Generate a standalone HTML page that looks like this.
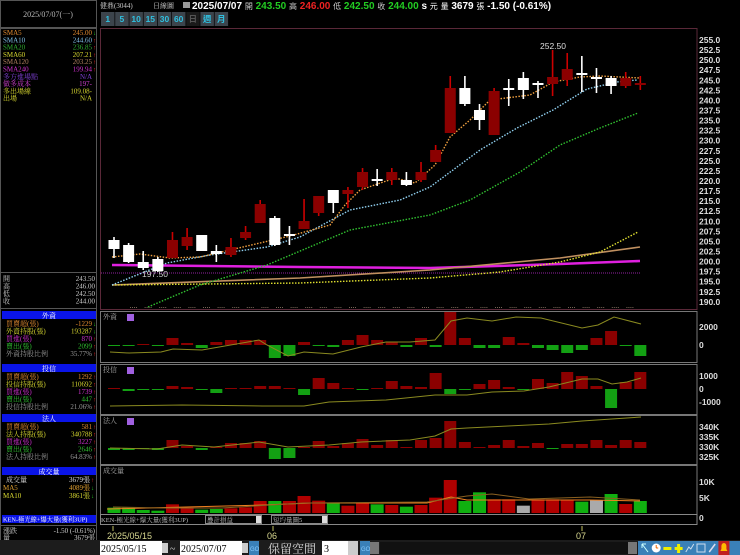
<!DOCTYPE html>
<html><head><meta charset="utf-8">
<style>
html,body{margin:0;padding:0;background:#000;width:740px;height:555px;overflow:hidden}
svg{display:block}
text{font-family:"Liberation Serif","Noto Serif CJK TC",serif;font-size:7px}
.s{font-family:"Liberation Sans","Noto Sans CJK TC",sans-serif}
</style></head><body>
<svg id="g" width="740" height="555" xmlns="http://www.w3.org/2000/svg">
<rect width="740" height="555" fill="#000"/>
</svg>
<script>
const S=document.getElementById('g');let h='';
function R(x,y,w,hh,f,st){h+=`<rect x="${x}" y="${y}" width="${w}" height="${hh}" fill="${f}"${st?` stroke="${st}"`:''}/>`;}
function L(x1,y1,x2,y2,c,w,d){h+=`<line x1="${x1}" y1="${y1}" x2="${x2}" y2="${y2}" stroke="${c}" stroke-width="${w||1}"${d?` stroke-dasharray="${d}"`:''}/>`;}
function T(x,y,t,c,o){o=o||{};h+=`<text x="${x}" y="${y}" fill="${c}"${o.a?` text-anchor="${o.a}"`:''}${o.cl?` class="${o.cl}"`:''}${o.s?` style="${o.s}"`:''}>${t}</text>`;}
function P(pts,c,w,d){h+=`<polyline points="${pts.map(p=>p.join(',')).join(' ')}" fill="none" stroke="${c}" stroke-width="${w||1}"${d?` stroke-dasharray="${d}"`:''}/>`;}
const RED='#8b0000',GRN='#13a013';
// left panel
R(0.5,0.5,96,27,'#000','#555');
T(48,17,'2025/07/07(一)','#bbb',{a:'middle',s:'font-size:8px'});
R(0.5,28.5,96,512,'#000','#555');
const ma=[['SMA5','245.00','#e08a30','↓','#2c2'],['SMA10','244.60','#80c0e8','↑','#e22'],['SMA20','236.85','#30b030','↑','#e22'],['SMA60','207.21','#d8d830','↑','#e22'],['SMA120','203.25','#b08060','↑','#e22'],['SMA240','199.94','#d030d0','↑','#e22'],['多方進場點','N/A','#8040d8','',''],['做多成本','197-','#d040d0','',''],['多出場線','109.08-','#d8d830','',''],['出場','N/A','#d8d830','','']];
ma.forEach((m,i)=>{let y=35+i*7.3;T(3,y,m[0],m[2]);T(92,y,m[1],m[2],{a:'end'});if(m[3])T(93,y,m[3],m[4],{s:'font-size:6px'});});
R(0.5,272.5,96,36,'#000','#555');
[['開','243.50'],['高','246.00'],['低','242.50'],['收','244.00']].forEach((m,i)=>{let y=281+i*7.5;T(3,y,m[0],'#ccc');T(95,y,m[1],'#ccc',{a:'end'});});
function sec(y0,title,rows){R(2,y0,94,8,'#0a14e8');T(49,y0+7,title,'#fff',{a:'middle'});rows.forEach((r,i)=>{let y=y0+15+i*7.5;T(6,y,r[0],r[2]);T(92,y,r[1],r[2],{a:'end'});if(r[3])T(93,y,r[3],r[3]=='↓'?'#2c2':'#e22',{s:'font-size:6px'});});}
sec(311,'外資',[['買賣超(張)','-1229','#e08a30','↓'],['外資持股(張)','193287','#d8d830','↓'],['買進(張)','870','#d030d0','↑'],['賣出(張)','2099','#30c030','↑'],['外資持股比例','35.77%','#999','↑']]);
sec(364,'投信',[['買賣超(張)','1292','#e08a30','↑'],['投信持股(張)','110692','#d8d830','↑'],['買進(張)','1739','#d030d0','↑'],['賣出(張)','447','#30c030','↑'],['投信持股比例','21.06%','#999','↑']]);
sec(414,'法人',[['買賣超(張)','581','#e08a30','↑'],['法人持股(張)','340788','#d8d830','↑'],['買進(張)','3227','#d030d0','↑'],['賣出(張)','2646','#30c030','↑'],['法人持股比例','64.83%','#999','↑']]);
R(2,467,94,8,'#0a14e8');T(49,474,'成交量','#fff',{a:'middle'});
T(6,482,'成交量','#ddd');T(90,482,'3679張','#ddd',{a:'end'});T(91,482,'↑','#e22',{s:'font-size:6px'});
T(3,490,'MA5','#e0a030');T(90,490,'4089張','#e0a030',{a:'end'});T(91,490,'↓','#2c2',{s:'font-size:6px'});
T(3,498,'MA10','#d8d830');T(90,498,'3861張','#d8d830',{a:'end'});T(91,498,'↓','#2c2',{s:'font-size:6px'});
R(2,515,94,8,'#0a14e8');T(3,521.5,'KEN-極光線+爆大量(獲利3UP)','#fff',{s:'font-size:6.3px'});
L(0,525.5,97,525.5,'#555');
T(3,533,'漲跌','#ccc');T(95,533,'-1.50 (-0.61%)','#ccc',{a:'end'});
T(3,540,'量','#ccc');T(95,540,'3679張','#ccc',{a:'end'});
// header
T(100,8,'健鼎(3044)','#ccc');T(153,8,'日線圖','#ccc');R(183,2,7,6,'#999');
h+=`<text x="192" y="9" class="s" style="font-size:10px;font-weight:bold" fill="#fff">2025/07/07 <tspan fill="#ccc" style="font-size:8px;font-weight:normal">開</tspan> <tspan fill="#2c2">243.50</tspan> <tspan fill="#ccc" style="font-size:8px;font-weight:normal">高</tspan> <tspan fill="#e22">246.00</tspan> <tspan fill="#ccc" style="font-size:8px;font-weight:normal">低</tspan> <tspan fill="#2c2">242.50</tspan> <tspan fill="#ccc" style="font-size:8px;font-weight:normal">收</tspan> <tspan fill="#2c2">244.00</tspan> s <tspan style="font-size:8px;font-weight:normal">元</tspan>  <tspan style="font-size:8px;font-weight:normal">量</tspan> 3679 <tspan style="font-size:8px;font-weight:normal">張</tspan>  -1.50 (-0.61%)</text>`;
['1','5','10','15','30','60','日','週','月'].forEach((b,i)=>{let x=101+i*14.2;R(x,12,13.5,14,b=='日'?'#1a1a1a':'#3c444c');T(x+6.7,22,b,b=='日'?'#555':'#30c0e0',{a:'middle',cl:'s',s:'font-size:8.5px;font-weight:bold'});});
// main chart
R(100.5,28.5,596.5,281,'#000','#5a2838');
for(let i=0;i<=26;i++){let p=255-i*2.5,y=40+i*10.07;T(699,y+3,p.toFixed(1),'#ddd',{cl:'s',s:'font-size:8.5px;font-weight:bold'});}
const X=i=>114+14.62*i;
L(101,273,640,273,'#9020a0',1,'1 1');
P([[112,265],[300,267],[430,268],[560,264],[640,261]],'#e020e0',2.5);
P([[112,285],[300,278],[430,270],[560,258],[640,247]],'#c09060',1.6);
P([[112,285],[300,283],[430,278],[500,272],[560,262],[600,252],[638,232]],'#e0e030',1.4,'1.5 1.5');
P([[148,307],[200,285],[267,265],[350,230],[430,215],[470,200],[520,172],[560,145],[600,128],[638,113]],'#30c030',1.4,'1.5 1.5');
P([[112,285],[167,263],[210,255],[267,247],[300,237],[350,210],[400,200],[430,187],[480,150],[517,128],[553,110],[587,89],[617,82],[637,80]],'#90d0f0',1.4,'1.5 1.5');
P([[112,257],[140,254],[170,258],[200,257],[230,250],[260,243],[290,236],[330,225],[345,205],[360,190],[395,178],[415,183],[435,165],[450,137],[470,120],[490,100],[530,95],[553,82],[580,77],[600,76],[640,78]],'#f0a040',1.4,'1.5 1.5');
const C=[[240,249,237,258,'w'],[245,262,243,263,'w'],[262,268,251,270,'w'],[259,271,257,272,'w'],[240,258,232,258,'r'],[237,246,228,250,'r'],[235,251,235,251,'w'],[251,254,245,262,'w'],[247,255,238,257,'r'],[232,238,226,240,'r'],[204,223,200,223,'r'],[218,245,216,246,'w'],[234,236,226,245,'w'],[221,229,199,229,'r'],[196,213,196,216,'r'],[190,203,190,213,'w'],[190,194,187,208,'r'],[172,187,168,190,'r'],[179,181,169,186,'w'],[172,180,168,185,'r'],[180,185,172,186,'w'],[172,180,162,182,'r'],[150,162,145,162,'r'],[88,133,76,133,'r'],[88,104,76,106,'w'],[110,120,104,130,'w'],[91,135,88,135,'r'],[88,90,79,106,'w'],[78,90,72,99,'w'],[83,85,81,98,'w'],[77,84,50,96,'r'],[69,80,53,86,'r'],[73,75,56,92,'w'],[77,79,68,93,'w'],[78,86,76,94,'w'],[78,86,72,88,'r'],[83,85,76,90,'r']];
C.forEach((c,i)=>{let x=X(i),col=c[4]=='r'?RED:'#fff',wc=c[4]=='r'?'#c00':'#fff';L(x,c[2],x,c[3],wc,1.6);R(x-5.5,c[0],11,Math.max(2,c[1]-c[0]),col);});
T(553,49,'252.50','#ddd',{a:'middle',cl:'s',s:'font-size:8.5px'});
T(155,277,'197.50','#ccc',{a:'middle',cl:'s',s:'font-size:8.5px'});
for(let x=130;x<640;x+=14.6)L(x,307.5,x+8,307.5,'#776655',1,'1 1');
function panel(y0,y1,label,zero,scale,vals,line,labels){
 R(100.5,y0+.5,596.5,y1-y0,'#000','#777');
 T(103,y0+8,label,'#aaa',{s:'font-size:7px'});R(127,y0+3,7,7,'#a060e0');
 vals.forEach((v,i)=>{let x=X(i),t=v*scale;R(x-6,t<0?zero+t:zero,12,Math.max(1,Math.abs(t)),t<0?RED:GRN);});
 P(line,'#8a8a20',1);
 labels.forEach(l=>T(699,l[1]+3,l[0],'#ddd',{cl:'s',s:'font-size:8.5px;font-weight:bold'}));
}
const p1=[1,1,-1,1,-7,-2,3,-3,-5,-5,-5,13,11,-3,1,2,-5,-10,-5,-3,2,-7,2,-33,-7,3,3,-8,-2,3,5,8,5,-7,-14,1,11];
panel(311,362,'外資',345,1,p1,[[110,352],[129,353],[161,352],[173,349],[202,350],[259,340],[267,345],[288,356],[304,352],[333,354],[361,347],[386,342],[410,342],[435,340],[451,321],[467,318],[492,321],[516,317],[541,318],[582,328],[598,325],[614,317],[641,324]],[['2000',327],['0',345]]);
const p2=[-1,2,1,1,-3,-2,1,4,-1,-1,-3,-3,-1,6,-11,-6,-1,1,-1,-8,-3,-2,-16,5,1,-5,-9,-2,1,-10,-6,-17,-13,-3,19,-7,-17];
panel(364,414,'投信',389,1,p2,[[110,406],[182,405],[263,406],[304,406],[329,402],[386,400],[435,395],[467,395],[492,392],[524,391],[549,387],[582,379],[598,379],[612,384],[627,382],[641,378]],[['1000',376],['0',389],['-1000',402]]);
const p3=[2,2,1,2,-8,-2,2,-1,-5,-5,-7,11,10,-1,-7,-2,-5,-9,-3,-8,-1,-8,-10,-27,-6,-1,-3,-8,-2,-5,1,-4,-4,-8,-3,-8,-6];
panel(415,464,'法人',448,1,p3,[[110,448],[157,449],[182,445],[214,447],[259,442],[288,447],[329,445],[361,442],[410,440],[435,436],[451,429],[467,428],[508,426],[549,424],[582,421],[641,417]],[['340K',427],['335K',437],['330K',447],['325K',457]]);
R(100.5,465.5,596.5,49,'#000','#777');T(103,473,'成交量','#aaa',{s:'font-size:7px'});
const vb=513,vv=[[143,'g'],[143,'g'],[150,'g'],[152,'g'],[133,'r'],[142,'r'],[149,'g'],[147,'g'],[145,'r'],[142,'r'],[123,'r'],[123,'g'],[123,'r'],[108,'r'],[122,'r'],[130,'g'],[137,'r'],[130,'r'],[133,'g'],[135,'r'],[140,'g'],[135,'r'],[113,'r'],[60,'r'],[123,'g'],[97,'g'],[118,'r'],[118,'r'],[137,'y'],[118,'r'],[118,'r'],[120,'r'],[125,'g'],[120,'y'],[102,'g'],[132,'r'],[123,'g']];
vv.forEach((v,i)=>{let x=X(i),t=460+v[0]/3;R(x-6.5,t,13,vb-t,v[1]=='r'?'#b00000':v[1]=='g'?'#10b010':'#aaa');});
P([[107,509],[263,505],[312,503],[427,503],[451,497],[467,500],[590,500],[640,501]],'#f08020',1);
P([[113,507],[161,508],[222,508],[304,503],[427,502],[467,496],[492,494],[529,499],[590,497],[640,500]],'#8a6020',1);
T(699,485,'10K','#ddd',{cl:'s',s:'font-size:8.5px;font-weight:bold'});T(699,501,'5K','#ddd',{cl:'s',s:'font-size:8.5px;font-weight:bold'});T(699,521,'0','#ddd',{cl:'s',s:'font-size:8.5px;font-weight:bold'});
R(100.5,514.5,596.5,10,'#000','#888');
T(101,522,'KEN-極光線+爆大量(獲利3UP)','#bbb',{s:'font-size:6.5px'});
R(205.5,515.5,56,8,'#000','#888');T(207,522,'疊計損益','#bbb',{s:'font-size:6.5px'});R(256,516,5,7,'#ddd');
R(271.5,515.5,56,8,'#000','#888');T(273,522,'短均量圖5','#bbb',{s:'font-size:6.5px'});R(322,516,5,7,'#ddd');
[[113,'2025/05/15'],[273,'06'],[582,'07']].forEach(d=>{L(d[0],526,d[0],531,'#c0c060');T(d[0]-6,539,d[1],'#d8d890',{cl:'s',s:'font-size:9px'});});
R(0,540,740,15,'#1c1c1c');
R(100,541,62,14,'#fff');T(101,552,'2025/05/15','#000',{s:'font-size:10px'});R(162,543,6,10,'#ccc');
T(170,552,'~','#ccc',{s:'font-size:10px'});
R(180,541,62,14,'#fff');T(181,552,'2025/07/07','#000',{s:'font-size:10px'});R(242,543,6,10,'#ccc');
R(249,541,10,14,'#3a80b8');T(250,551,'GO','#8cf',{cl:'s',s:'font-size:6px'});
T(268,553,'保留空間','#ddd',{s:'font-size:12px'});
R(322,541,26,14,'#fff');T(324,552,'3','#000',{s:'font-size:10px'});R(348,541,10,14,'#ccc');
R(360,541,10,14,'#3a80b8');T(361,551,'GO','#8cf',{cl:'s',s:'font-size:6px'});
R(370,542,9,12,'#777');R(380,542,248,12,'#111');R(628,542,9,12,'#777');
R(638,541,102,14,'#3a80b8');
for(let i=0;i<9;i++){let x=640+i*11.2,y=548;
 if(i==0)h+=`<path d="M${x+2} ${y-4}L${x+8} ${y+4}M${x+2} ${y-4}h4M${x+2} ${y-4}v4" stroke="#cff" fill="none"/>`;
 if(i==1){h+=`<circle cx="${x+5}" cy="${y}" r="4.5" fill="#fff"/>`;L(x+5,y,x+5,y-3,'#e60');L(x+5,y,x+7,y,'#e60');}
 if(i==2)R(x+1,y-1,8,3,'#ee0');
 if(i==3){R(x+1,y-1,8,3,'#ee0');R(x+3.5,y-4,3,9,'#ee0');}
 if(i==4)h+=`<path d="M${x+1} ${y+4}L${x+4} ${y-1}L${x+6} ${y+1}L${x+9} ${y-4}" stroke="#cde" fill="none"/>`;
 if(i==5)h+=`<path d="M${x+1} ${y-4}h8v8h-8z" stroke="#cde" fill="none"/>`;
 if(i==6)L(x+2,y+4,x+8,y-4,'#dde',1.5);
 if(i==7){R(x,y-7,11,14,'#c02020');h+=`<path d="M${x+2} ${y+3}h7l-1-2v-3a2.5 3 0 0 0-5 0v3z" fill="#fb0"/>`;}
}
S.insertAdjacentHTML('beforeend',h);
</script>
</body></html>
